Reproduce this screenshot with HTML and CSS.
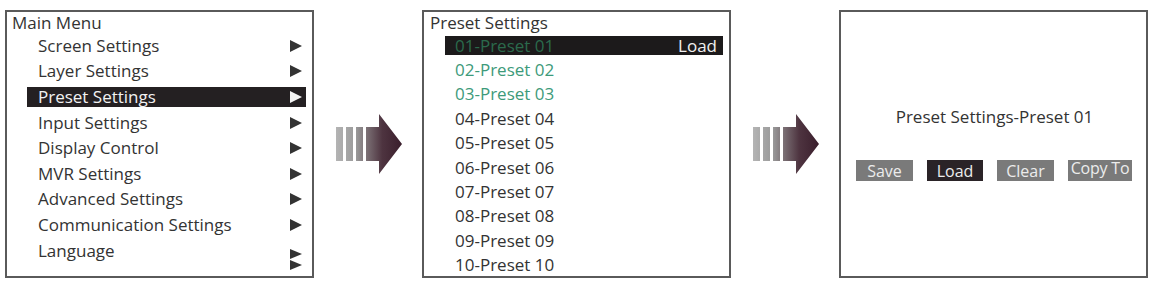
FILE: index.html
```html
<!DOCTYPE html>
<html>
<head>
<meta charset="utf-8">
<link rel="stylesheet" href="styles.css">
</head>
<body>
<div class="stage">
  <div class="panel menu">
    <div class="title">Main Menu</div>
    <div class="row"><span>Screen Settings</span><span class="tri"></span></div>
    <div class="row"><span>Layer Settings</span><span class="tri"></span></div>
    <div class="row sel"><span>Preset Settings</span><span class="tri"></span></div>
    <div class="row"><span>Input Settings</span><span class="tri"></span></div>
    <div class="row"><span>Display Control</span><span class="tri"></span></div>
    <div class="row"><span>MVR Settings</span><span class="tri"></span></div>
    <div class="row"><span>Advanced Settings</span><span class="tri"></span></div>
    <div class="row"><span>Communication Settings</span><span class="tri"></span></div>
    <div class="row"><span>Language</span><span class="tri double"><i></i><i></i></span></div>
  </div>

  <svg class="arrow" width="66" height="60" viewBox="0 0 66 60">
    <defs>
      <linearGradient id="ag1" gradientUnits="userSpaceOnUse" x1="0" y1="0" x2="66" y2="0">
        <stop offset="0" stop-color="#b4b4b4"/>
        <stop offset="0.3" stop-color="#9a9a9a"/>
        <stop offset="0.45" stop-color="#7e7478"/>
        <stop offset="0.7" stop-color="#4e3440"/>
        <stop offset="1" stop-color="#3a1e2c"/>
      </linearGradient>
    </defs>
    <rect x="0" y="13" width="7" height="34" fill="url(#ag1)"/>
    <rect x="10" y="13" width="7" height="34" fill="url(#ag1)"/>
    <rect x="20" y="13" width="7" height="34" fill="url(#ag1)"/>
    <path d="M30 13 H43 V0 L66 30 L43 60 V47 H30 Z" fill="url(#ag1)"/>
  </svg>

  <div class="panel presets">
    <div class="title">Preset Settings</div>
    <div class="prow sel"><span class="green-dark">01-Preset 01</span><span class="load">Load</span></div>
    <div class="prow"><span class="green">02-Preset 02</span></div>
    <div class="prow"><span class="green">03-Preset 03</span></div>
    <div class="prow"><span>04-Preset 04</span></div>
    <div class="prow"><span>05-Preset 05</span></div>
    <div class="prow"><span>06-Preset 06</span></div>
    <div class="prow"><span>07-Preset 07</span></div>
    <div class="prow"><span>08-Preset 08</span></div>
    <div class="prow"><span>09-Preset 09</span></div>
    <div class="prow"><span>10-Preset 10</span></div>
  </div>

  <svg class="arrow" width="66" height="60" viewBox="0 0 66 60">
    <defs>
      <linearGradient id="ag2" gradientUnits="userSpaceOnUse" x1="0" y1="0" x2="66" y2="0">
        <stop offset="0" stop-color="#b4b4b4"/>
        <stop offset="0.3" stop-color="#9a9a9a"/>
        <stop offset="0.45" stop-color="#7e7478"/>
        <stop offset="0.7" stop-color="#4e3440"/>
        <stop offset="1" stop-color="#3a1e2c"/>
      </linearGradient>
    </defs>
    <rect x="0" y="13" width="7" height="34" fill="url(#ag2)"/>
    <rect x="10" y="13" width="7" height="34" fill="url(#ag2)"/>
    <rect x="20" y="13" width="7" height="34" fill="url(#ag2)"/>
    <path d="M30 13 H43 V0 L66 30 L43 60 V47 H30 Z" fill="url(#ag2)"/>
  </svg>

  <div class="panel confirm">
    <div class="ctitle">Preset Settings-Preset 01</div>
    <div class="btns">
      <span class="btn">Save</span>
      <span class="btn dark">Load</span>
      <span class="btn">Clear</span>
      <span class="btn top">Copy To</span>
    </div>
  </div>
</div>
</body>
</html>
```

FILE: styles.css
```css
html, body {
  margin: 0;
  padding: 0;
  background: #ffffff;
}

body {
  font-family: "Open Sans", "DejaVu Sans", sans-serif;
  font-size: 17px;
  color: #333333;
  width: 1151px;
  height: 281px;
  overflow: hidden;
}

.stage {
  display: flex;
  align-items: center;
  padding: 10px 0 0 5px;
  height: 268px;
}

.panel {
  box-sizing: border-box;
  width: 309px;
  height: 268px;
  border: 2px solid #5a5a5a;
  flex: none;
}

.arrow {
  flex: none;
  display: block;
}

.menu + .arrow,
.presets + .arrow {
  margin: 0 20px 0 22px;
}

/* ---- Main menu ---- */
.menu {
  display: flex;
  flex-direction: column;
  padding: 0 6px 0 5px;
}

.title {
  height: 21px;
  line-height: 21px;
  white-space: nowrap;
  flex: none;
}

.row {
  flex: none;
  display: flex;
  align-items: center;
  justify-content: space-between;
  height: 20px;
  margin: 2.8px 0 2.8px 15px;
  padding: 0 4px 0 11px;
  line-height: 20px;
  white-space: nowrap;
}

.row.sel {
  background: #242022;
  color: #f2f2f2;
}

.tri {
  width: 0;
  height: 0;
  border-top: 6px solid transparent;
  border-bottom: 6px solid transparent;
  border-left: 12px solid #333333;
}

.row.sel .tri {
  border-left-color: #f4f4f4;
}

.tri.double {
  border: none;
  width: 12px;
  height: 12px;
  display: flex;
  flex-direction: column;
  position: relative;
  top: 4px;
}

.tri.double i {
  display: block;
  width: 0;
  height: 0;
  border-top: 5px solid transparent;
  border-bottom: 5px solid transparent;
  border-left: 12px solid #333333;
  margin-bottom: 1px;
}

/* ---- Presets ---- */
.presets {
  display: flex;
  flex-direction: column;
  padding: 0 6px 0 6px;
}

.prow {
  flex: none;
  display: flex;
  align-items: center;
  justify-content: space-between;
  height: 19px;
  margin: 2.7px 0 2.7px 15px;
  padding: 0 6px 0 10px;
  line-height: 19px;
  white-space: nowrap;
}

.prow.sel {
  background: #1c1a1b;
}

.green-dark {
  color: #2b6a4c;
}

.green {
  color: #3d9a7a;
}

.load {
  color: #f0f0f0;
}

/* ---- Confirm ---- */
.confirm {
  display: flex;
  flex-direction: column;
  align-items: center;
  padding-top: 94px;
}

.ctitle {
  line-height: 22px;
  height: 22px;
  white-space: nowrap;
  margin-left: 2px;
}

.btns {
  display: flex;
  gap: 14px;
  margin-top: 32px;
  margin-left: 1px;
}

.btn {
  box-sizing: border-box;
  width: 57px;
  height: 21px;
  line-height: 23px;
  background: #7a7a7a;
  color: #ececec;
  font-size: 16px;
  text-align: center;
  white-space: nowrap;
}

.btn.dark {
  width: 56px;
  background: #2a2327;
}

.btn.top {
  width: 64px;
  line-height: 17px;
  letter-spacing: -0.2px;
}
```
